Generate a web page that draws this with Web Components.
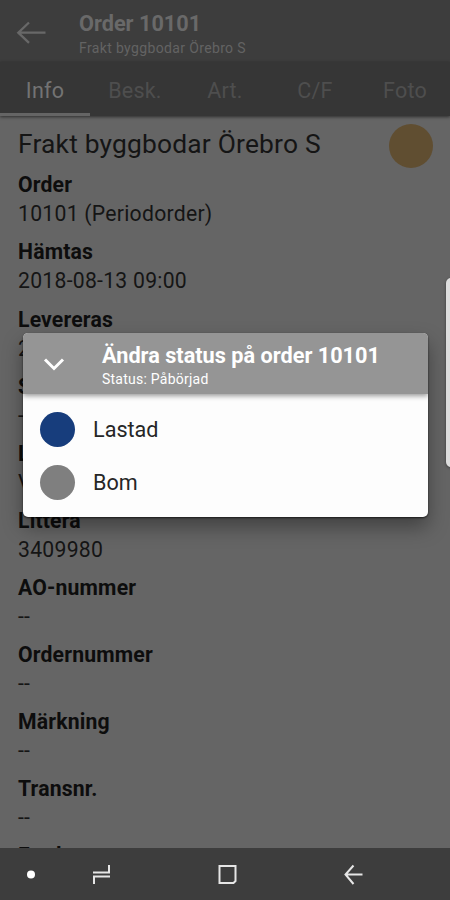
<!DOCTYPE html>
<html lang="sv">
<head>
<meta charset="utf-8">
<title>Order 10101</title>
<style>
html,body{margin:0;height:900px;overflow:hidden;background:#656565}
body{font-family:Roboto,"Noto Sans",sans-serif}
</style>
</head>
<body>
<order-screen></order-screen>
<script>
const define = (name, html) => customElements.define(name, class extends HTMLElement {
  constructor() {
    super();
    this.attachShadow({mode: 'open'}).innerHTML = html;
  }
});

define('app-header', `<style>
:host{display:flex;height:62px;background:#3d3d3d;color:#6c6c6c;box-sizing:border-box}
svg{width:79px;height:62px;flex:none}
.t{padding-top:10px;white-space:nowrap}
h1{margin:0;font-size:21.7px;line-height:27px;font-weight:700;color:#696969}
p{margin:2px 0 0;font-size:14px;line-height:18px;color:#636363;letter-spacing:.36px}
</style>
<svg viewBox="0 0 79 62" fill="none" stroke="#686868" stroke-width="2.3"><path d="M45.5 32.7H18.5M29 22.5L18.3 32.7L29 42.8"/></svg>
<div class="t"><h1><slot name="title"></slot></h1><p><slot></slot></p></div>`);

define('tab-item', `<style>
:host{display:flex;flex:1;height:54px;padding-top:5px;align-items:center;justify-content:center;font-size:21.5px;color:#4e4e4e;box-sizing:border-box;border-bottom:3px solid transparent;letter-spacing:.2px}
:host([active]){color:#737373;border-bottom-color:#656565}
</style><slot></slot>`);

define('tab-bar', `<style>
:host{display:flex;height:54px;background:#363636;box-shadow:0 1px 3px rgba(0,0,0,.55);position:relative}
</style><slot></slot>`);

define('info-row', `<style>
:host{display:block;height:67.1px;white-space:nowrap}
b{display:block;font-size:21.2px;line-height:29px;font-weight:700;color:#0d0d0d;letter-spacing:.17px}
div{font-size:21.2px;line-height:29px;color:#151515;font-weight:400;letter-spacing:.25px}
</style><b><slot name="label"></slot></b><div><slot></slot></div>`);

define('status-dot', `<style>
:host{display:block;flex:none;width:var(--size,35px);height:var(--size,35px);border-radius:50%;background:var(--dot,#7f7f7f)}
</style>`);

define('status-option', `<style>
:host{display:flex;align-items:center;gap:18px;height:52.5px;padding-left:17px;font-size:21.6px;color:#262626}
</style><status-dot></status-dot><span><slot></slot></span>`);

define('status-dialog', `<style>
:host{display:block;width:405px;height:184px;border-radius:5px;overflow:hidden;background:#fdfdfd;box-shadow:0 1px 2px rgba(0,0,0,.65),0 10px 20px rgba(0,0,0,.36)}
header{display:flex;height:61px;background:#959595;color:#fff;box-shadow:0 2px 5px rgba(0,0,0,.4);position:relative;white-space:nowrap}
svg{width:79px;height:61px;flex:none}
.t{padding-top:9px}
h2{margin:0;font-size:21.7px;line-height:27px;font-weight:700}
p{margin:1px 0 0;font-size:14px;line-height:18px;letter-spacing:.24px}
.o{padding-top:9.5px}
</style>
<header><svg viewBox="0 0 79 61" fill="none" stroke="#fff" stroke-width="3"><path d="M22 26.5L31 35.5L40 26.5"/></svg>
<div class="t"><h2><slot name="title"></slot></h2><p><slot name="sub"></slot></p></div></header>
<div class="o"><slot></slot></div>`);

define('nav-bar', `<style>
:host{display:block;height:52px;background:#3d3d3d}
svg{display:block;width:450px;height:52px}
</style>
<svg viewBox="0 848 450 52" fill="none" stroke="#e6e6e6" stroke-width="2">
<circle cx="31" cy="874.5" r="4" fill="#fff" stroke="none"/>
<path d="M93 872.5H109V865M110 876.5H94V884"/>
<path d="M219.5 866H235.5V881L233.5 883H219.5Z"/>
<path d="M362.5 874.5H346M353.5 865.5L345.5 874.5L353.5 884"/>
</svg>`);

define('order-screen', `<style>
:host{display:flex;flex-direction:column;width:450px;height:900px;position:relative;overflow:hidden;background:#656565}
main{flex:1;min-height:0;overflow:hidden;padding:0 17px 0 18px}
.head{display:flex;justify-content:space-between;height:54.4px}
h3{margin:0;padding-top:12px;font-size:26.4px;line-height:32px;font-weight:400;color:#151515;white-space:nowrap;letter-spacing:.18px}
.head status-dot{margin-top:8px;--size:44px;--dot:#604e31}
status-dialog{position:absolute;left:23px;top:333px}
.edge{position:absolute;left:446px;top:278px;width:12px;height:189px;border-radius:5px;background:#dedede;box-shadow:0 1px 3px rgba(0,0,0,.4)}
</style>
<app-header><span slot="title">Order 10101</span>Frakt byggbodar Örebro S</app-header>
<tab-bar><tab-item active>Info</tab-item><tab-item>Besk.</tab-item><tab-item>Art.</tab-item><tab-item>C/F</tab-item><tab-item>Foto</tab-item></tab-bar>
<main>
<div class="head"><h3>Frakt byggbodar Örebro S</h3><status-dot></status-dot></div>
<info-row><span slot="label">Order</span>10101 (Periodorder)</info-row>
<info-row><span slot="label">Hämtas</span>2018-08-13 09:00</info-row>
<info-row><span slot="label">Levereras</span>2</info-row>
<info-row><span slot="label">S</span>--</info-row>
<info-row><span slot="label">L</span>V</info-row>
<info-row><span slot="label">Littera</span>3409980</info-row>
<info-row><span slot="label">AO-nummer</span>--</info-row>
<info-row><span slot="label">Ordernummer</span>--</info-row>
<info-row><span slot="label">Märkning</span>--</info-row>
<info-row><span slot="label">Transnr.</span>--</info-row>
<info-row><span slot="label">Fordon</span></info-row>
</main>
<nav-bar></nav-bar>
<div class="edge"></div>
<status-dialog><span slot="title">Ändra status på order 10101</span><span slot="sub">Status: Påbörjad</span>
<status-option style="--dot:#173d7c">Lastad</status-option><status-option style="--dot:#7f7f7f">Bom</status-option></status-dialog>`);
</script>
</body>
</html>
